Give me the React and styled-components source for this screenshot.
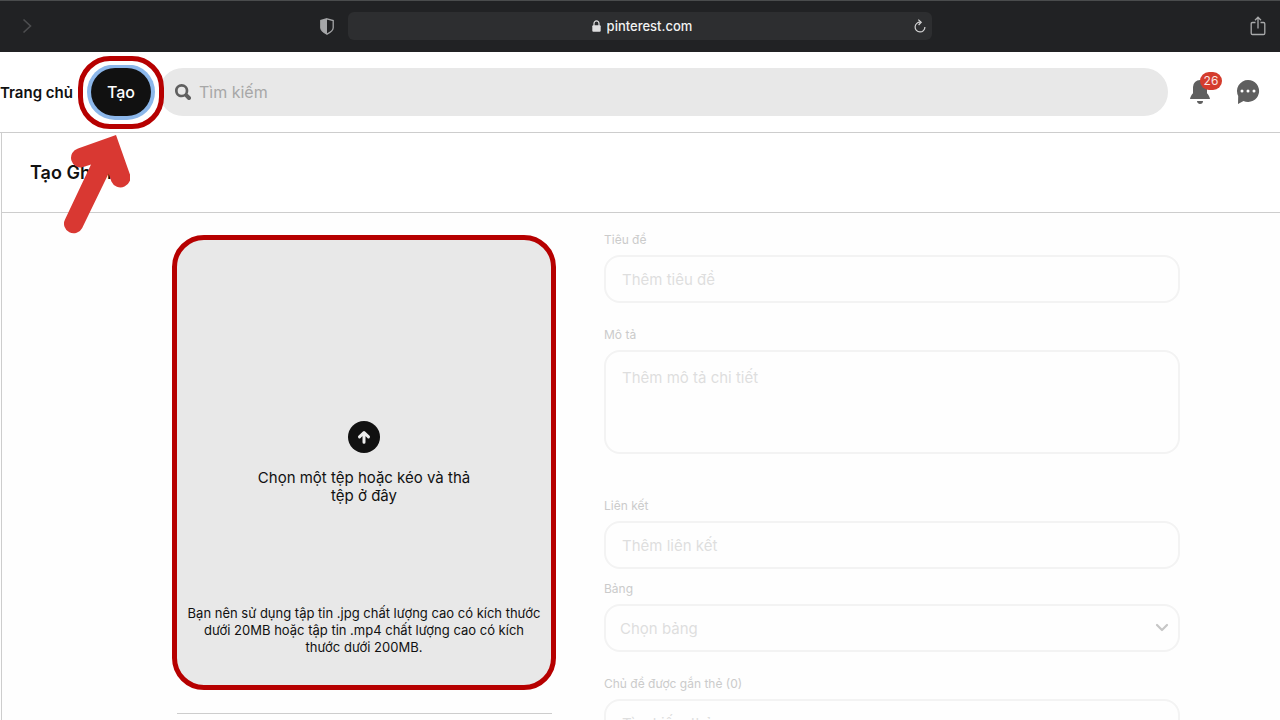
import React from 'react';
import styled, { createGlobalStyle } from 'styled-components';

const App = () => {
  return (
    <>
      <GlobalStyle />
      <BrowserBar>
        <BarSide $spread>
          <BarButton type="button" aria-label="Forward">
            <svg width="10" height="16" viewBox="0 0 10 16" fill="none" stroke="#4d4e50" strokeWidth="1.6">
              <path d="M1.5 1.5 8.5 8l-7 6.5" />
            </svg>
          </BarButton>
          <BarButton type="button" aria-label="Privacy report">
            <svg width="14" height="17" viewBox="0 0 14 17">
              <path d="M7 .8 13.2 2.6v7.2c0 2.8-3 4.8-6.2 6.4C3.8 14.6.8 12.6.8 9.8V2.6z" fill="none" stroke="#a5a6a8" strokeWidth="1.3" />
              <path d="M7 .8v15.4C3.8 14.6.8 12.6.8 9.8V2.6z" fill="#a5a6a8" />
            </svg>
          </BarButton>
        </BarSide>
        <AddressBar>
          <Address>
            <svg width="9" height="12" viewBox="0 0 9 12">
              <path d="M2 6V3.4a2.5 2.5 0 0 1 5 0V6" fill="none" stroke="#dededf" strokeWidth="1.2" />
              <rect x="0.3" y="5.2" width="8.4" height="6.6" rx="1" fill="#dededf" />
            </svg>
            <AddressInput type="text" aria-label="Address" defaultValue="pinterest.com" />
          </Address>
          <BarButton type="button" aria-label="Reload">
            <svg width="12" height="14" viewBox="0 0 12 14" fill="none" stroke="#d4d4d5" strokeWidth="1.2">
              <path d="M6.5 3.2A4.9 4.9 0 1 0 10.9 8" />
              <path d="M4.3.6 7.2 3.2 4.6 6" />
            </svg>
          </BarButton>
        </AddressBar>
        <BarSide>
          <BarButton type="button" aria-label="Share">
            <svg width="16" height="20" viewBox="0 0 16 20" fill="none" stroke="#a9aaab" strokeWidth="1.3">
              <path d="M5.5 6.5h-3q-1.3 0-1.3 1.3v9.4q0 1.3 1.3 1.3h11q1.3 0 1.3-1.3V7.8q0-1.3-1.3-1.3h-3" />
              <path d="M8 12.5V1.3M5 4.2l3-3 3 3" />
            </svg>
          </BarButton>
        </BarSide>
      </BrowserBar>

      <Header>
        <HomeLink href="#">Trang chủ</HomeLink>
        <CreateWrapper>
          <CreateButton type="button">Tạo</CreateButton>
          <CreateRing />
          <Arrow width="70" height="106" viewBox="0 0 70 106" aria-hidden="true">
            <path
              d="M56 5 18 18.5A9.5 9.5 0 0 0 23.3 37L31 34.5 5 89.5A9.5 9.5 0 0 0 22.2 98L48.6 43.5l2.8 8A9.5 9.5 0 0 0 69.6 43.5z"
              fill="#d93832"
            />
          </Arrow>
        </CreateWrapper>
        <SearchBox>
          <svg width="16" height="16" viewBox="0 0 24 24" fill="#5f5f5f" aria-hidden="true">
            <path d="M10 16a6 6 0 1 1 0-12 6 6 0 0 1 0 12m13.12 2.88-4.26-4.26A9.97 9.97 0 0 0 20 10c0-5.52-4.48-10-10-10S0 4.48 0 10s4.48 10 10 10c1.67 0 3.24-.41 4.62-1.14l4.26 4.26a3 3 0 0 0 4.24 0 3 3 0 0 0 0-4.24" />
          </svg>
          <SearchInput type="search" aria-label="Tìm kiếm" placeholder="Tìm kiếm" />
        </SearchBox>
        <HeaderIcons>
          <IconButton type="button" aria-label="Thông báo">
            <svg width="24" height="24" viewBox="0 0 24 24" fill="#5f5f5f">
              <path d="M12 24c-1.66 0-3-1.34-3-3h6a3 3 0 0 1-3 3zm7-10.83c1.58 1.52 2.67 3.55 3 5.83H2c.33-2.28 1.42-4.31 3-5.83V7a7 7 0 0 1 14 0v6.17z" />
            </svg>
            <Badge>26</Badge>
          </IconButton>
          <IconButton type="button" aria-label="Tin nhắn">
            <svg width="24" height="24" viewBox="0 0 24 24">
              <path d="M12 0a11 11 0 1 1-4.5 21L2 24l.2-8A11 11 0 0 1 12 0" fill="#5f5f5f" />
              <circle cx="6" cy="11" r="1.5" fill="#fff" />
              <circle cx="12" cy="11" r="1.5" fill="#fff" />
              <circle cx="18" cy="11" r="1.5" fill="#fff" />
            </svg>
          </IconButton>
        </HeaderIcons>
      </Header>

      <Panel>
        <TitleRow>
          <Title>Tạo Ghim</Title>
        </TitleRow>
        <Columns>
          <div>
            <DropZone>
              <FileInput type="file" />
              <DropPrompt>
                <svg width="32" height="32" viewBox="0 0 32 32" aria-hidden="true">
                  <circle cx="16" cy="16" r="16" fill="#111" />
                  <path d="M16 21.2V12M11.5 15.9 16 11.5l4.5 4.4" fill="none" stroke="#eee" strokeWidth="3" strokeLinecap="round" strokeLinejoin="round" />
                </svg>
                <span>Chọn một tệp hoặc kéo và thả tệp ở đây</span>
              </DropPrompt>
              <DropHint>
                Bạn nên sử dụng tập tin .jpg chất lượng cao có kích thước dưới 20MB hoặc tập tin .mp4 chất lượng cao có kích thước dưới 200MB.
              </DropHint>
            </DropZone>
            <Divider />
          </div>
          <PinForm>
            <Field>
              <Label htmlFor="title">Tiêu đề</Label>
              <TextInput id="title" type="text" placeholder="Thêm tiêu đề" />
            </Field>
            <Field $space={24}>
              <Label htmlFor="description">Mô tả</Label>
              <TextArea id="description" placeholder="Thêm mô tả chi tiết" />
            </Field>
            <Field $space={44}>
              <Label htmlFor="link">Liên kết</Label>
              <TextInput id="link" type="text" placeholder="Thêm liên kết" />
            </Field>
            <Field $space={12}>
              <Label htmlFor="board">Bảng</Label>
              <SelectWrapper>
                <Select id="board" defaultValue="">
                  <option value="">Chọn bảng</option>
                </Select>
                <Chevron width="14" height="10" viewBox="0 0 14 10" aria-hidden="true">
                  <path d="M2 2l5 5 5-5" fill="none" stroke="#c6c6c6" strokeWidth="2.2" strokeLinecap="round" strokeLinejoin="round" />
                </Chevron>
              </SelectWrapper>
            </Field>
            <Field $space={24}>
              <Label htmlFor="topics">Chủ đề được gắn thẻ (0)</Label>
              <TextInput id="topics" type="text" placeholder="Tìm kiếm thẻ" />
            </Field>
          </PinForm>
        </Columns>
      </Panel>
    </>
  );
};

const GlobalStyle = createGlobalStyle`
  * {
    box-sizing: border-box;
  }

  html {
    scrollbar-width: none;
  }

  body {
    margin: 0;
    background: #fefefe;
    color: #111;
    font-family: Inter, "Liberation Sans", sans-serif;
    font-size: 16px;
  }

  button, input, textarea, select {
    font-family: inherit;
    font-size: inherit;
  }

  svg {
    display: block;
    flex-shrink: 0;
  }
`;

const BrowserBar = styled.div`
  display: grid;
  grid-template-columns: 1fr minmax(0, 584px) 1fr;
  align-items: center;
  height: 52px;
  background: #212224;
  box-shadow: inset 0 1px #4a4c4d;
`;

const BarSide = styled.div`
  display: flex;
  align-items: center;
  justify-content: ${(props) => (props.$spread ? 'space-between' : 'flex-end')};
  padding: 0 14px 0 22px;
`;

const BarButton = styled.button`
  padding: 0;
  border: 0;
  background: none;
`;

const AddressBar = styled.div`
  display: flex;
  align-items: center;
  height: 28px;
  padding: 0 6px 0 22px;
  border-radius: 6px;
  background: #2d2e30;
`;

const Address = styled.div`
  flex: 1;
  display: flex;
  align-items: center;
  justify-content: center;
  gap: 6px;
`;

const AddressInput = styled.input`
  field-sizing: content;
  padding: 0;
  border: 0;
  background: none;
  color: #f2f2f2;
  font-size: 13px;
  font-weight: 500;
`;

const Header = styled.header`
  display: flex;
  align-items: center;
  height: 81px;
  padding-right: 8px;
  background: #fff;
  border-bottom: 1px solid #cdcdcd;
`;

const HomeLink = styled.a`
  margin-right: 18px;
  color: #111;
  font-size: 15px;
  font-weight: 600;
  text-decoration: none;
  white-space: nowrap;
`;

const CreateWrapper = styled.div`
  position: relative;
  z-index: 1;
  margin-right: 8px;
`;

const CreateButton = styled.button`
  display: block;
  width: 60px;
  height: 48px;
  padding: 0;
  border: 0;
  border-radius: 24px;
  background: #111;
  box-shadow: 0 0 0 4px #8cb7ea;
  color: #fff;
  font-weight: 500;
`;

const CreateRing = styled.div`
  position: absolute;
  inset: -12px -13px -13px;
  border: 5px solid #b60000;
  border-radius: 32px;
  box-shadow: inset 0 0 0 4px #fff;
  pointer-events: none;
`;

const Arrow = styled.svg`
  position: absolute;
  top: 62px;
  left: -31px;
  pointer-events: none;
`;

const SearchBox = styled.div`
  flex: 1;
  display: flex;
  align-items: center;
  gap: 8px;
  height: 48px;
  padding: 0 16px;
  border-radius: 24px;
  background: #e8e8e8;
`;

const SearchInput = styled.input`
  flex: 1;
  padding: 0;
  border: 0;
  background: none;

  &::placeholder {
    color: #a7a7a7;
  }
`;

const HeaderIcons = styled.div`
  display: flex;
  margin-left: 8px;
`;

const IconButton = styled.button`
  position: relative;
  display: flex;
  align-items: center;
  justify-content: center;
  width: 48px;
  height: 48px;
  padding: 0;
  border: 0;
  background: none;
`;

const Badge = styled.span`
  position: absolute;
  top: 4px;
  left: 24px;
  width: 22px;
  border-radius: 9px;
  background: #d43c2d;
  color: #fbe5e2;
  font-size: 12px;
  line-height: 18px;
  text-align: center;
`;

const Panel = styled.main`
  margin-left: 1px;
  border-left: 1px solid #cdcdcd;
`;

const TitleRow = styled.div`
  display: flex;
  align-items: center;
  height: 80px;
  padding: 0 28px;
  background: #fff;
  border-bottom: 1px solid #cdcdcd;
`;

const Title = styled.h1`
  margin: 0;
  font-size: 18px;
  font-weight: 600;
`;

const Columns = styled.div`
  display: grid;
  grid-template-columns: 2fr 3fr;
  gap: 48px;
  padding: 0 100px 0 170px;
`;

const DropZone = styled.label`
  display: grid;
  grid-template-rows: 1fr auto 1fr;
  justify-items: center;
  min-height: 455px;
  margin-top: 22px;
  border: 5px solid #b60000;
  border-radius: 32px;
  background: #e8e8e8;
  text-align: center;
`;

const FileInput = styled.input`
  grid-row: 1;
  width: 1px;
  height: 1px;
  opacity: 0;
`;

const DropPrompt = styled.span`
  grid-row: 2;
  display: flex;
  flex-direction: column;
  align-items: center;
  gap: 16px;
  max-width: 230px;
  font-size: 15px;
  line-height: 18px;
`;

const DropHint = styled.span`
  grid-row: 3;
  align-self: end;
  max-width: 356px;
  padding-bottom: 29px;
  font-size: 13px;
  line-height: 17px;
`;

const Divider = styled.hr`
  margin: 23px 4px 0 5px;
  border: 0;
  border-top: 1px solid #cdcdcd;
`;

const PinForm = styled.form`
  padding: 19px 0 40px;
`;

const Field = styled.div`
  margin-top: ${(props) => props.$space || 0}px;
`;

const Label = styled.label`
  display: block;
  margin-bottom: 7px;
  color: #cbcbcb;
  font-size: 12px;
  line-height: 16px;
`;

const TextInput = styled.input`
  display: block;
  width: 100%;
  height: 48px;
  padding: 0 16px;
  border: 2px solid #f3f3f3;
  border-radius: 16px;
  background: #fefefe;
  font-size: 15px;

  &::placeholder {
    color: #dedede;
  }
`;

const TextArea = styled(TextInput).attrs({ as: 'textarea' })`
  height: 104px;
  padding: 16px;
  resize: none;
`;

const SelectWrapper = styled.div`
  position: relative;
`;

const Select = styled.select`
  display: block;
  width: 100%;
  height: 48px;
  padding: 0 40px 0 14px;
  border: 2px solid #f3f3f3;
  border-radius: 16px;
  background: #fefefe;
  color: #dedede;
  font-size: 15px;
  appearance: none;
`;

const Chevron = styled.svg`
  position: absolute;
  top: 19px;
  right: 11px;
  pointer-events: none;
`;

export default App;
